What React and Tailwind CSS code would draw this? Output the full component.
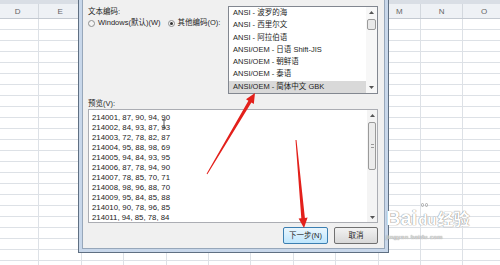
import React from 'react';

const FONT = "font-['Liberation_Sans','Noto_Sans_CJK_SC',sans-serif]";

// columns F..L sit behind the dialog, so their letters are left blank
const COLS = ['D', 'E', '', '', '', '', '', '', '', 'M', 'N', 'O'];
const ROWS = Array.from({ length: 23 }, (_, i) => i);

const ENCODINGS = [
    'ANSI - 波罗的海',
    'ANSI - 西里尔文',
    'ANSI - 阿拉伯语',
    'ANSI/OEM - 日语 Shift-JIS',
    'ANSI/OEM - 朝鲜语',
    'ANSI/OEM - 泰语',
    'ANSI/OEM - 简体中文 GBK',
];

const PREVIEW = [
    '214001, 87, 90, 94, 90',
    '214002, 84, 93, 87, 93',
    '214003, 72, 78, 82, 87',
    '214004, 95, 88, 98, 69',
    '214005, 94, 84, 93, 95',
    '214006, 87, 78, 94, 90',
    '214007, 78, 85, 70, 71',
    '214008, 98, 96, 88, 70',
    '214009, 95, 84, 85, 88',
    '214010, 90, 78, 96, 85',
    '214011, 94, 85, 78, 84',
];

const Tri = ({ up }) => (
    <svg width="5" height="3" viewBox="0 0 5 3">
        <path d={up ? 'M0 3 L2.5 0 L5 3 Z' : 'M0 0 L2.5 3 L5 0 Z'} fill="#555" />
    </svg>
);

const Sheet = () => (
    <div className="flex flex-col">
        <div className="h-[4px] bg-[#d9dee5]" />
        <div className="flex ml-[-3px] h-[15px] bg-[#eef1f5] border-b border-[#c3c9d1]">
            {COLS.map((c, i) => (
                <div key={i} className="w-[42.4px] shrink-0 border-r border-[#d3d8de] text-center text-[8px] leading-[15px] text-[#666]">
                    {c}
                </div>
            ))}
        </div>
        {ROWS.map((r) => (
            <div key={r} className="flex ml-[-3px] h-[11px]">
                {COLS.map((c, i) => (
                    <div key={i} className="w-[42.4px] shrink-0 border-r border-b border-[#dde1e6] bg-white" />
                ))}
            </div>
        ))}
    </div>
);

const Radio = ({ checked }) => (
    <span className="w-[7px] h-[7px] rounded-full border border-[#8e8f8f] bg-[#f4f4f4] flex items-center justify-center">
        {checked && <span className="w-[3px] h-[3px] rounded-full bg-[#333]" />}
    </span>
);

const Dialog = () => (
    <div className="absolute left-[78px] top-0 w-[311px] h-[253px] border-x border-b border-[#5f6f82] bg-[#c8d7ea]">
        <div className="mx-[3px] h-[249px] border-x border-b border-[#97a7ba] bg-[#f0f0f0] pl-[5px] pr-[6px] flex flex-col text-[7.5px] text-[#1e1e1e]">
            {/* encoding choice + list */}
            <div className="h-[94px] flex shrink-0">
                <div className="flex-1 pt-[7px]">
                    <div className="h-[9px] leading-[9px]">文本编码:</div>
                    <div className="mt-[3px] h-[8px] flex items-center">
                        <Radio />
                        <span className="ml-[3px] leading-[8px]">Windows(默认)(W)</span>
                        <span className="ml-[7px]"><Radio checked /></span>
                        <span className="ml-[3px] leading-[8px]">其他编码(O):</span>
                    </div>
                </div>
                <div className="w-[150px] mt-[6px] h-[88px] border border-[#828790] bg-white flex">
                    <div className="flex-1 flex flex-col">
                        {ENCODINGS.map((e, i) => (
                            <div
                                key={e}
                                className={`h-[12.3px] leading-[12.3px] pl-[4px] whitespace-nowrap ${i === ENCODINGS.length - 1 ? 'bg-[#d9d9d9]' : ''}`}
                            >
                                {e}
                            </div>
                        ))}
                    </div>
                    <div className="w-[11px] bg-[#f7f7f7] flex flex-col items-center">
                        <div className="h-[11px] flex items-center"><Tri up /></div>
                        <div className="mt-[1px] w-[9px] h-[11px] rounded-[2px] border border-[#9a9a9a] bg-[#e9e9e9]" />
                        <div className="flex-1" />
                        <div className="h-[11px] flex items-center"><Tri /></div>
                    </div>
                </div>
            </div>

            {/* preview */}
            <div className="h-[15px] pt-[5px] leading-[9px] shrink-0">预览(V):</div>
            <div className="h-[114px] shrink-0 border border-[#abadb3] bg-white flex">
                <div className="flex-1 pt-[3px] pl-[3px] text-[7.8px] leading-[10px] text-[#222]">
                    {PREVIEW.map((l) => (
                        <div key={l} className="whitespace-nowrap">{l}</div>
                    ))}
                </div>
                <div className="w-[10px] bg-[#f4f4f4] flex flex-col items-center">
                    <div className="h-[10px] flex items-center"><Tri up /></div>
                    <div className="mt-[2px] w-[8px] h-[48px] rounded-[2px] border border-[#9a9a9a] bg-[#ececec] flex items-center justify-center">
                        <div className="w-[3px] h-[4px] border-y border-[#999]" />
                    </div>
                    <div className="flex-1" />
                    <div className="h-[10px] flex items-center"><Tri /></div>
                </div>
            </div>

            {/* buttons */}
            <div className="mt-[4px] h-[17px] flex justify-end gap-[6px] shrink-0">
                <button className="w-[45px] h-[17px] rounded-[2px] border border-[#3c7fb1] bg-gradient-to-b from-[#eaf6fd] to-[#bee6fd] text-[7.5px] text-[#1e1e1e]">
                    下一步(N)
                </button>
                <button className="w-[44px] h-[17px] rounded-[2px] border border-[#707070] bg-gradient-to-b from-[#f2f2f2] to-[#d8d8d8] text-[7.5px] text-[#1e1e1e]">
                    取消
                </button>
            </div>
        </div>
    </div>
);

const Arrows = () => (
    <svg className="absolute left-0 top-0" width="500" height="265" viewBox="0 0 500 265">
        <polygon
            points="206.6,173.7 248.4,100.7 246,99.3 255,93 253.8,103.9 251.4,102.5 207.4,174.3"
            fill="#e3201b"
        />
        <polygon
            points="295.5,140 301.3,218.2 298.6,218.5 304,228 307.6,217.6 304.9,217.9 296.5,140"
            fill="#e3201b"
        />
        {/* text cursor */}
        <path d="M162 120 h4 M164 120 v8 M162 128 h4" stroke="#333" strokeWidth="0.8" fill="none" />
    </svg>
);

const Watermark = () => (
    <div className="absolute left-[386px] top-[208px] flex flex-col text-white [text-shadow:0_0_1px_#8a8a8a,0_0_1px_#8a8a8a]">
        <div className="flex items-end">
            <span className="text-[20px] font-bold leading-[20px]">Bai</span>
            <span className="relative text-[15px] font-bold leading-[16px] ml-[1px]">
                du
                <span className="absolute left-[3px] top-[-9px] flex gap-[1px]">
                    <span className="w-[3px] h-[4px] rounded-full border border-[#aaa]" />
                    <span className="w-[3px] h-[4px] rounded-full border border-[#aaa]" />
                </span>
            </span>
            <span className="text-[16px] font-bold leading-[17px] ml-[1px]">经验</span>
        </div>
        <div className="mt-[6px] text-[6px] leading-[7px] tracking-[0.5px] text-[#e8e8e8]">jingyan.baidu.com</div>
    </div>
);

export default function App() {
    return (
        <div className={`relative w-[500px] h-[265px] overflow-hidden bg-white ${FONT}`}>
            <Sheet />
            <Dialog />
            <Arrows />
            <Watermark />
        </div>
    );
}
